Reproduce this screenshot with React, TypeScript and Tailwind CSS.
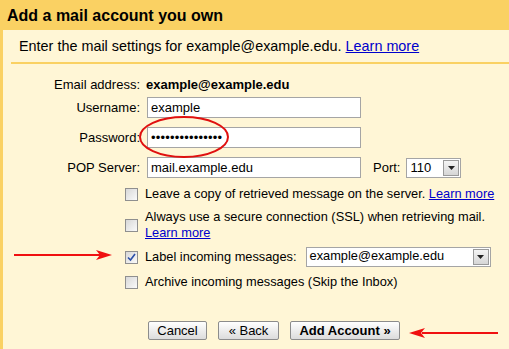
import React from 'react';

const font = { fontFamily: '"Liberation Sans", Arial, sans-serif' };

function Checkbox({ checked = false }: { checked?: boolean }) {
  return (
    <span className="relative mt-[1px] flex h-[13px] w-[13px] shrink-0 items-center justify-center border border-[#8f8f8f] bg-gradient-to-br from-[#d8d8d8] to-[#fafafa]">
      {checked && (
        <svg width="9" height="9" viewBox="0 0 9 9" className="absolute">
          <path d="M1 4.5 L3.5 7 L8 1" fill="none" stroke="#2b4fa8" strokeWidth="1.6" />
        </svg>
      )}
    </span>
  );
}

function SelectBox({ value, className }: { value: string; className: string }) {
  return (
    <div className={`flex items-center border border-[#a5a5a5] bg-white pl-[3px] pr-[1px] ${className}`}>
      <span className="flex-1 leading-none">{value}</span>
      <span className="flex h-[16px] w-[16px] items-center justify-center border border-[#9a9a9a] bg-gradient-to-b from-[#f4f4f4] to-[#d6d6d6]">
        <svg width="7" height="4" viewBox="0 0 7 4">
          <path d="M0 0 L7 0 L3.5 4 Z" fill="#222" />
        </svg>
      </span>
    </div>
  );
}

function Button({ children, bold = false, className = '' }: { children: React.ReactNode; bold?: boolean; className?: string }) {
  return (
    <button
      className={`flex h-[19px] items-center justify-center rounded-[2px] border border-[#8c8c8c] bg-gradient-to-b from-[#ffffff] to-[#dcdcdc] text-[13px] leading-none text-black ${bold ? 'font-bold' : ''} ${className}`}
    >
      {children}
    </button>
  );
}

export default function App() {
  return (
    <div className="relative h-[349px] w-[509px] overflow-hidden bg-[#fad163] text-black" style={font}>
      <div className="flex h-[30px] items-center pl-[7px] pt-[2px] text-[16px] font-bold">Add a mail account you own</div>

      <div className="ml-[3px] h-[319px] bg-[#fff6d6]">
        {/* intro line */}
        <div className="ml-[8px] flex h-[34px] items-center border-b-2 border-[#fad163] pl-[8px] pt-[2px] text-[14.4px]">
          Enter the mail settings for example@example.edu.&nbsp;
          <a className="text-[#0000cc] underline">Learn more</a>
        </div>

        {/* settings */}
        <div className="pt-[10px] text-[13px]">
          <div className="flex h-[21px] items-center">
            <span className="w-[137px] text-right">Email address:</span>
            <span className="ml-[6px] font-bold">example@example.edu</span>
          </div>

          <div className="mt-[2px] flex h-[21px] items-center">
            <span className="w-[137px] text-right">Username:</span>
            <div className="ml-[7px] flex h-[21px] w-[214px] items-center border border-[#a5a5a5] bg-white pl-[3px]">example</div>
          </div>

          <div className="mt-[9px] flex h-[21px] items-center">
            <span className="w-[137px] text-right">Password:</span>
            <div className="ml-[7px] flex h-[21px] w-[214px] items-center border border-[#a5a5a5] bg-white pl-[3px] tracking-[0.2px]">
              •••••••••••••••
            </div>
          </div>

          <div className="mt-[9px] flex h-[21px] items-center">
            <span className="w-[137px] text-right">POP Server:</span>
            <div className="ml-[7px] flex h-[21px] w-[214px] items-center border border-[#a5a5a5] bg-white pl-[3px]">mail.example.edu</div>
            <span className="ml-[12px]">Port:</span>
            <SelectBox value="110" className="ml-[6px] h-[20px] w-[55px]" />
          </div>

          {/* options */}
          <div className="ml-[122px] mt-[8px] flex flex-col text-[12.8px]">
            <div className="flex h-[16px] items-center gap-[7px]">
              <Checkbox />
              <span>
                Leave a copy of retrieved message on the server. <a className="text-[#0000cc] underline">Learn more</a>
              </span>
            </div>

            <div className="mt-[7px] flex items-center gap-[7px]">
              <Checkbox />
              <div className="leading-[16px]">
                Always use a secure connection (SSL) when retrieving mail.
                <br />
                <a className="text-[#0000cc] underline">Learn more</a>
              </div>
            </div>

            <div className="mt-[6px] flex h-[19px] items-center gap-[7px]">
              <Checkbox checked />
              <span>Label incoming messages:</span>
              <SelectBox value="example@example.edu" className="ml-[2px] h-[20px] w-[185px]" />
            </div>

            <div className="mt-[8px] flex h-[16px] items-center gap-[7px]">
              <Checkbox />
              <span>Archive incoming messages (Skip the Inbox)</span>
            </div>
          </div>

          {/* buttons */}
          <div className="ml-[145px] mt-[31px] flex gap-[11px]">
            <Button className="w-[59px]">Cancel</Button>
            <Button className="w-[61px]">« Back</Button>
            <Button bold className="w-[110px]">Add Account »</Button>
          </div>
        </div>
      </div>

      {/* annotations */}
      <svg className="pointer-events-none absolute left-0 top-0" width="509" height="349">
        <ellipse cx="184" cy="137" rx="44" ry="20" fill="none" stroke="#e01010" strokeWidth="2" />
        <line x1="14" y1="255" x2="100" y2="255" stroke="#f01010" strokeWidth="2" />
        <path d="M112 255 L96 250 L100 255 L96 260 Z" fill="#f01010" />
        <line x1="422" y1="333" x2="498" y2="333" stroke="#f01010" strokeWidth="2" />
        <path d="M409 333 L425 328 L421 333 L425 338 Z" fill="#f01010" />
      </svg>
    </div>
  );
}
